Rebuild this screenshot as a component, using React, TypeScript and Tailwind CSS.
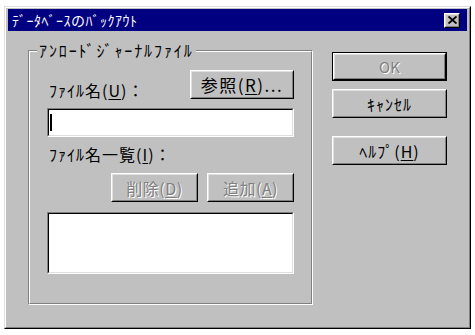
import React from "react";

function Raised({
  children,
  className = "",
  def = false,
  disabled = false,
  textClass = "",
}: {
  children: React.ReactNode;
  className?: string;
  def?: boolean;
  disabled?: boolean;
  textClass?: string;
}) {
  const body = (
    <div className="h-full w-full border border-t-white border-l-white border-r-black border-b-black">
      <div
        className={
          "h-full w-full border border-t-[#dfdfdf] border-l-[#dfdfdf] border-r-[#808080] border-b-[#808080] bg-[#c0c0c0] flex items-center justify-center whitespace-nowrap " +
          (disabled ? "text-[#808080] [text-shadow:1px_1px_0_#ffffff] " : "text-black ") +
          textClass
        }
      >
        {children}
      </div>
    </div>
  );
  return (
    <div className={className}>
      {def ? <div className="h-full w-full border border-black">{body}</div> : body}
    </div>
  );
}

function Sunken({ children, className = "" }: { children?: React.ReactNode; className?: string }) {
  return (
    <div className={"border border-t-[#808080] border-l-[#808080] border-r-white border-b-white " + className}>
      <div className="h-full w-full border border-t-black border-l-black border-r-[#dfdfdf] border-b-[#dfdfdf] bg-white">
        {children}
      </div>
    </div>
  );
}

export default function App() {
  return (
    <div className="w-[475px] h-[335px] bg-white pt-[6px] pl-[4px] [font-family:'Noto_Sans_CJK_JP',sans-serif] overflow-hidden">
      <div className="w-[467px] h-[323px] border border-t-[#dfdfdf] border-l-[#dfdfdf] border-r-black border-b-black">
        <div className="h-full w-full border border-t-white border-l-white border-r-[#808080] border-b-[#808080] bg-[#c0c0c0] px-[2px] pt-[1px] flex flex-col">
          {/* caption */}
          <div className="h-[22px] bg-[#000080] flex items-center justify-between pl-[4px] pr-[7px]">
            <span className="text-white text-[14px] leading-[18px] tracking-[0.5px] whitespace-nowrap">
              ﾃﾞｰﾀﾍﾞｰｽのﾊﾞｯｸｱｳﾄ
            </span>
            <Raised className="w-[16px] h-[15px]">
              <svg width="9" height="8" viewBox="0 0 9 8">
                <path d="M0.5 0.5 L8.5 7.5 M8.5 0.5 L0.5 7.5" stroke="black" strokeWidth="1.8" fill="none" />
              </svg>
            </Raised>
          </div>

          {/* body */}
          <div className="flex pl-[20px] pt-[19px]">
            {/* group box */}
            <div className="relative w-[285px] h-[255px] border border-t-[#808080] border-l-[#808080] border-r-white border-b-white">
              <div className="h-full w-full border border-t-white border-l-white border-r-[#808080] border-b-[#808080] pt-[18px] px-[17px] flex flex-col">
                <div className="flex justify-between items-end h-[29px]">
                  <span className="pl-[2px] text-[16px] leading-[18px] tracking-[1px] whitespace-nowrap">
                    ﾌｧｲﾙ名(<span className="underline underline-offset-2">U</span>)：
                  </span>
                  <Raised className="w-[104px] h-[29px]" textClass="text-[17px] leading-[18px] tracking-[1.5px]">
                    参照(<span className="underline underline-offset-2">R</span>)...
                  </Raised>
                </div>
                <Sunken className="mt-[9px] h-[29px] w-full">
                  <div className="h-full flex items-center pl-[1px]">
                    <span className="w-[2px] h-[17px] bg-black" />
                  </div>
                </Sunken>
                <div className="mt-[7px] h-[20px] pl-[2px] text-[16px] leading-[20px] tracking-[1px] whitespace-nowrap">
                  ﾌｧｲﾙ名一覧(<span className="underline underline-offset-2">I</span>)：
                </div>
                <div className="mt-[9px] flex justify-end gap-[9px]">
                  <Raised className="w-[87px] h-[29px]" disabled textClass="text-[16px] leading-[18px] tracking-[0.5px]">
                    削除(<span className="underline underline-offset-2">D</span>)
                  </Raised>
                  <Raised className="w-[87px] h-[29px]" disabled textClass="text-[16px] leading-[18px] tracking-[0.5px]">
                    追加(<span className="underline underline-offset-2">A</span>)
                  </Raised>
                </div>
                <Sunken className="mt-[10px] h-[62px] w-full" />
              </div>
              <span className="absolute left-[8px] top-[-11px] px-[2px] bg-[#c0c0c0] text-[16px] leading-[20px] tracking-[1.9px] whitespace-nowrap">
                ｱﾝﾛｰﾄﾞｼﾞｬｰﾅﾙﾌｧｲﾙ
              </span>
            </div>

            {/* right buttons */}
            <div className="ml-[19px] pt-[2px] flex flex-col">
              <Raised className="w-[115px] h-[29px]" def disabled textClass="text-[15px] leading-[18px]">
                OK
              </Raised>
              <Raised className="mt-[8px] w-[115px] h-[29px]" textClass="text-[16px] leading-[18px] tracking-[1px]">
                ｷｬﾝｾﾙ
              </Raised>
              <Raised className="mt-[18px] w-[115px] h-[29px]" textClass="text-[16px] leading-[18px] tracking-[1px]">
                ﾍﾙﾌﾟ(<span className="underline underline-offset-2">H</span>)
              </Raised>
            </div>
          </div>
        </div>
      </div>
    </div>
  );
}
